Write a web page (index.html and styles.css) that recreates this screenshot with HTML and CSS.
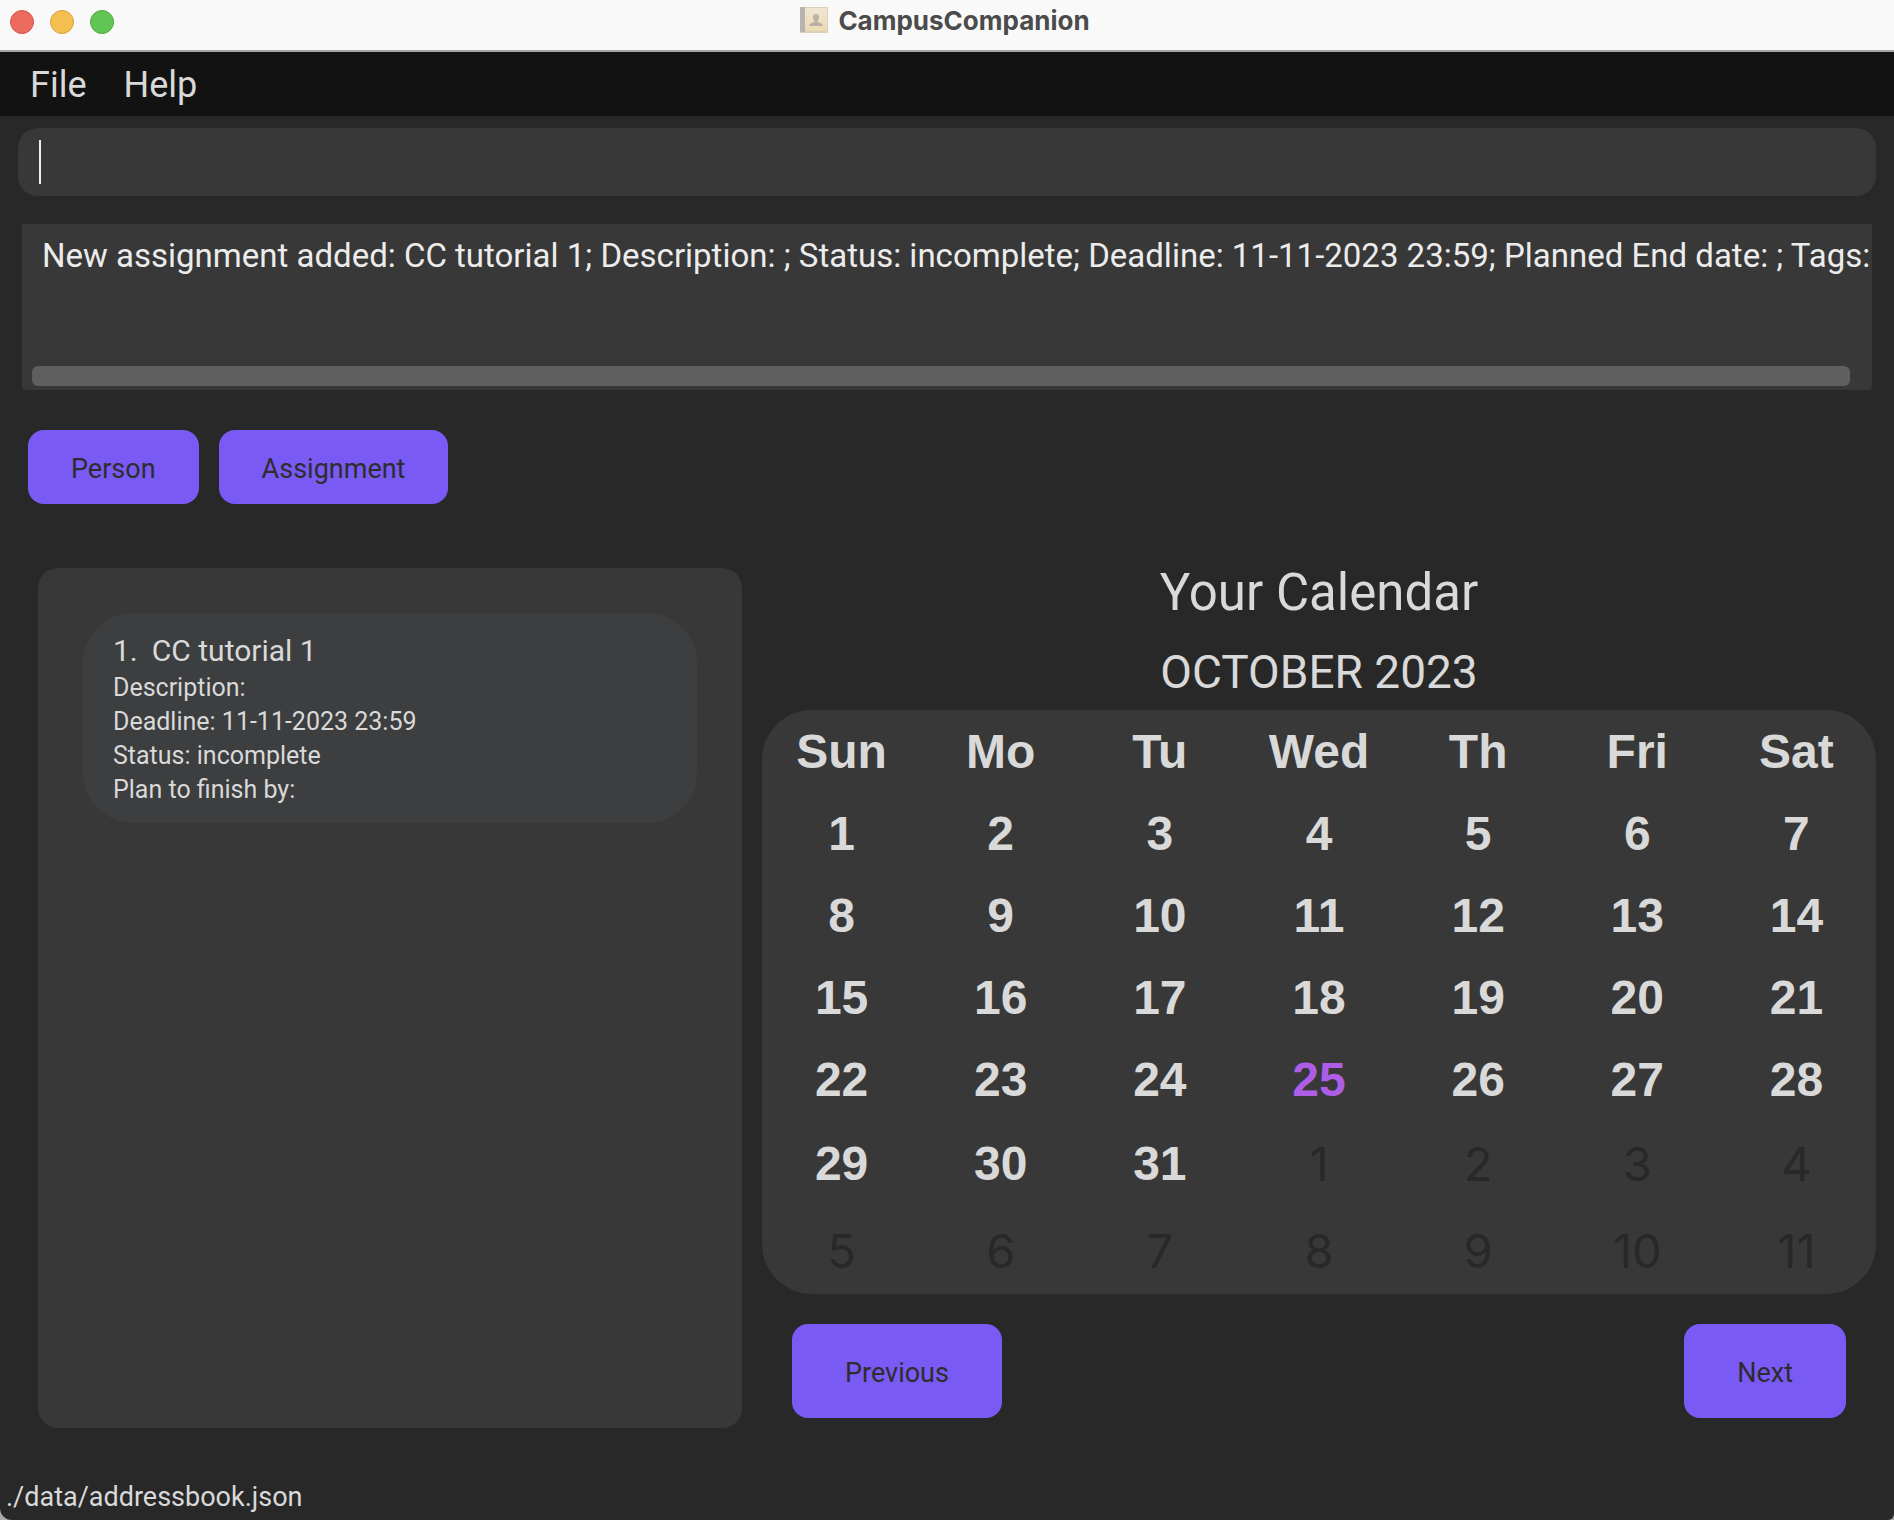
FILE: index.html
```html
<!DOCTYPE html>
<html lang="en">
<head>
<meta charset="utf-8">
<meta name="viewport" content="width=device-width, initial-scale=1">
<title>CampusCompanion</title>
<link rel="stylesheet" href="styles.css">
</head>
<body>
<div class="window">
  <header class="titlebar">
    <div class="lights">
      <button class="light light-close" type="button" aria-label="Close"></button>
      <button class="light light-minimise" type="button" aria-label="Minimise"></button>
      <button class="light light-zoom" type="button" aria-label="Zoom"></button>
    </div>
    <h1 class="app-name">
      <svg class="app-icon" viewBox="0 0 28 28" aria-hidden="true">
        <defs>
          <linearGradient id="cover" x1="0" y1="0" x2="0" y2="1">
            <stop offset="0" stop-color="#efe6d3"/>
            <stop offset="1" stop-color="#ecd9b5"/>
          </linearGradient>
        </defs>
        <rect x="0" y="0" width="28" height="26" rx="1" fill="#dccfb8"/>
        <rect x="1" y="1" width="26" height="23" fill="url(#cover)"/>
        <rect x="0" y="0" width="5" height="25" rx="1" fill="#b9b2ae"/>
        <path d="M16 7c2 0 3 1.400 3 3.200 0 1.500-.7 2.600-1.500 3.300v1.300l4 1.600c1 .4 1.300 1.200 1.300 2.600H9.200c0-1.400.3-2.200 1.300-2.600l4-1.600v-1.300c-.8-.7-1.500-1.800-1.500-3.300C13 8.400 14 7 16 7z" fill="#b9b1a4"/>
      </svg>
      CampusCompanion
    </h1>
  </header>

  <nav class="menubar">
    <button class="menu" type="button">File</button>
    <button class="menu" type="button">Help</button>
  </nav>

  <form class="command">
    <input class="command-input" type="text" aria-label="Command">
    <span class="caret"></span>
  </form>

  <section class="result">
    <textarea class="result-text" aria-label="Result" rows="1" wrap="off" readonly>New assignment added: CC tutorial 1; Description: ; Status: incomplete; Deadline: 11-11-2023 23:59; Planned End date: ; Tags:</textarea>
    <div class="scroll-thumb"></div>
  </section>

  <div class="tabs">
    <button class="btn btn-tab" type="button">Person</button>
    <button class="btn btn-tab" type="button">Assignment</button>
  </div>

  <main class="content">
    <section class="list">
      <article class="card">
        <h2 class="card-title"><span>1.</span><span>CC tutorial 1</span></h2>
        <p>Description:</p>
        <p>Deadline: 11-11-2023 23:59</p>
        <p>Status: incomplete</p>
        <p>Plan to finish by:</p>
      </article>
    </section>

    <section class="calendar">
      <h2 class="calendar-title">Your Calendar</h2>
      <h3 class="calendar-month">OCTOBER 2023</h3>
      <table class="month">
        <thead>
          <tr><th>Sun</th><th>Mo</th><th>Tu</th><th>Wed</th><th>Th</th><th>Fri</th><th>Sat</th></tr>
        </thead>
        <tbody>
          <tr><td>1</td><td>2</td><td>3</td><td>4</td><td>5</td><td>6</td><td>7</td></tr>
          <tr><td>8</td><td>9</td><td>10</td><td>11</td><td>12</td><td>13</td><td>14</td></tr>
          <tr><td>15</td><td>16</td><td>17</td><td>18</td><td>19</td><td>20</td><td>21</td></tr>
          <tr><td>22</td><td>23</td><td>24</td><td class="today">25</td><td>26</td><td>27</td><td>28</td></tr>
          <tr class="tall"><td>29</td><td>30</td><td>31</td><td class="other">1</td><td class="other">2</td><td class="other">3</td><td class="other">4</td></tr>
          <tr class="tall"><td class="other">5</td><td class="other">6</td><td class="other">7</td><td class="other">8</td><td class="other">9</td><td class="other">10</td><td class="other">11</td></tr>
        </tbody>
      </table>
      <div class="pager">
        <button class="btn btn-page" type="button">Previous</button>
        <button class="btn btn-page" type="button">Next</button>
      </div>
    </section>
  </main>

  <footer class="status">./data/addressbook.json</footer>
</div>
</body>
</html>
```
FILE: styles.css
```css
* {
  box-sizing: border-box;
}

html {
  background: #a9a9a9;
}

body {
  margin: 0;
  font-family: Roboto, "Liberation Sans", sans-serif;
  color: #d9d9d9;
}

h1, h2, h3, p {
  margin: 0;
  font-weight: 400;
}

button, input, textarea {
  margin: 0;
  border: 0;
  font: inherit;
  color: inherit;
  background: none;
  outline: none;
}

.window {
  display: flex;
  flex-direction: column;
  min-height: 100vh;
  background: #282828;
  border-radius: 0 0 6px 12px;
}

/* Title bar */

.titlebar {
  display: grid;
  grid-template-columns: 1fr auto 1fr;
  align-items: start;
  height: 52px;
  padding: 0 14px 0 10px;
  background: #f9f9f9;
  border-bottom: 2px solid #a6a6a6;
}

.lights {
  display: flex;
  gap: 16px;
  padding-top: 10px;
}

.light {
  width: 24px;
  height: 24px;
  padding: 0;
  border: 1px solid;
  border-radius: 50%;
}

.light-close {
  background: #ec6a5e;
  border-color: #d3544a;
}

.light-minimise {
  background: #f4bf4f;
  border-color: #d8a13c;
}

.light-zoom {
  background: #61c554;
  border-color: #50a73f;
}

.app-name {
  display: flex;
  align-items: center;
  gap: 10px;
  font: 700 26px/42px Inter, "Liberation Sans", sans-serif;
  color: #4b4b4b;
}

.app-icon {
  width: 28px;
  height: 28px;
}

/* Menu bar */

.menubar {
  display: flex;
  gap: 37px;
  padding: 2px 30px 0;
  background: #121212;
}

.menu {
  padding: 0;
  font-size: 36px;
  line-height: 62px;
}

/* Command box */

.command {
  position: relative;
  margin: 12px 18px 28px;
}

.command-input {
  display: block;
  width: 100%;
  height: 68px;
  padding: 0 22px;
  font-size: 33px;
  background: #383838;
  border-radius: 20px;
}

.caret {
  position: absolute;
  top: 12px;
  left: 21px;
  width: 2px;
  height: 44px;
  background: #f0f0f0;
}

/* Result display */

.result {
  display: flex;
  flex-direction: column;
  justify-content: space-between;
  height: 166px;
  margin: 0 22px;
  padding: 12px 0 4px;
  background: #383838;
  border-radius: 0 0 4px 4px;
}

.result-text {
  display: block;
  width: 100%;
  height: 40px;
  padding: 0 0 0 20px;
  font-size: 33px;
  line-height: 40px;
  color: #ececec;
  resize: none;
  overflow: hidden;
}

.scroll-thumb {
  height: 20px;
  margin: 0 22px 0 10px;
  background: #5f5f5f;
  border-radius: 6px;
}

/* Buttons */

.btn {
  padding-top: 4px;
  padding-bottom: 0;
  font-size: 27px;
  color: #2d2d2d;
  background: #7a5af5;
  border-radius: 16px;
}

.btn-tab {
  height: 74px;
  padding-left: 43px;
  padding-right: 43px;
}

.btn-page {
  height: 94px;
  padding-left: 53px;
  padding-right: 53px;
}

.tabs {
  display: flex;
  gap: 20px;
  padding: 40px 28px 64px;
}

/* Main area */

.content {
  display: grid;
  grid-template-columns: 704fr 1114fr;
  gap: 20px;
  flex: 1;
  padding: 0 18px 53px 38px;
}

.list {
  padding: 45px;
  background: #383838;
  border-radius: 20px;
}

.card {
  padding: 18px 30px 16px;
  font-size: 25px;
  line-height: 34px;
  background: #3c3e3f;
  border-radius: 50px;
}

.card-title {
  display: flex;
  gap: 14px;
  font-size: 30px;
  line-height: 40px;
}

/* Calendar */

.calendar {
  text-align: center;
}

.calendar-title {
  font-size: 51px;
  line-height: 50px;
}

.calendar-month {
  margin: 24px 0 8px;
  font-size: 46px;
  line-height: 60px;
}

.month {
  width: 100%;
  table-layout: fixed;
  border-spacing: 0;
  font: 700 48px/56px "Liberation Sans", Arial, sans-serif;
  background: #383838;
  border-radius: 50px;
}

.month th, .month td {
  height: 82px;
  padding: 2px 0 0;
}

.month .tall td {
  height: 87px;
  padding: 0;
}

.month .today {
  color: #ae5ee6;
}

.month .other {
  font: 400 47px/56px Inter, "Liberation Sans", sans-serif;
  color: #282828;
}

.pager {
  display: flex;
  justify-content: space-between;
  padding: 30px 30px 0;
}

/* Status bar */

.status {
  padding: 0 6px 7px;
  font-size: 27px;
  line-height: 32px;
}
```
